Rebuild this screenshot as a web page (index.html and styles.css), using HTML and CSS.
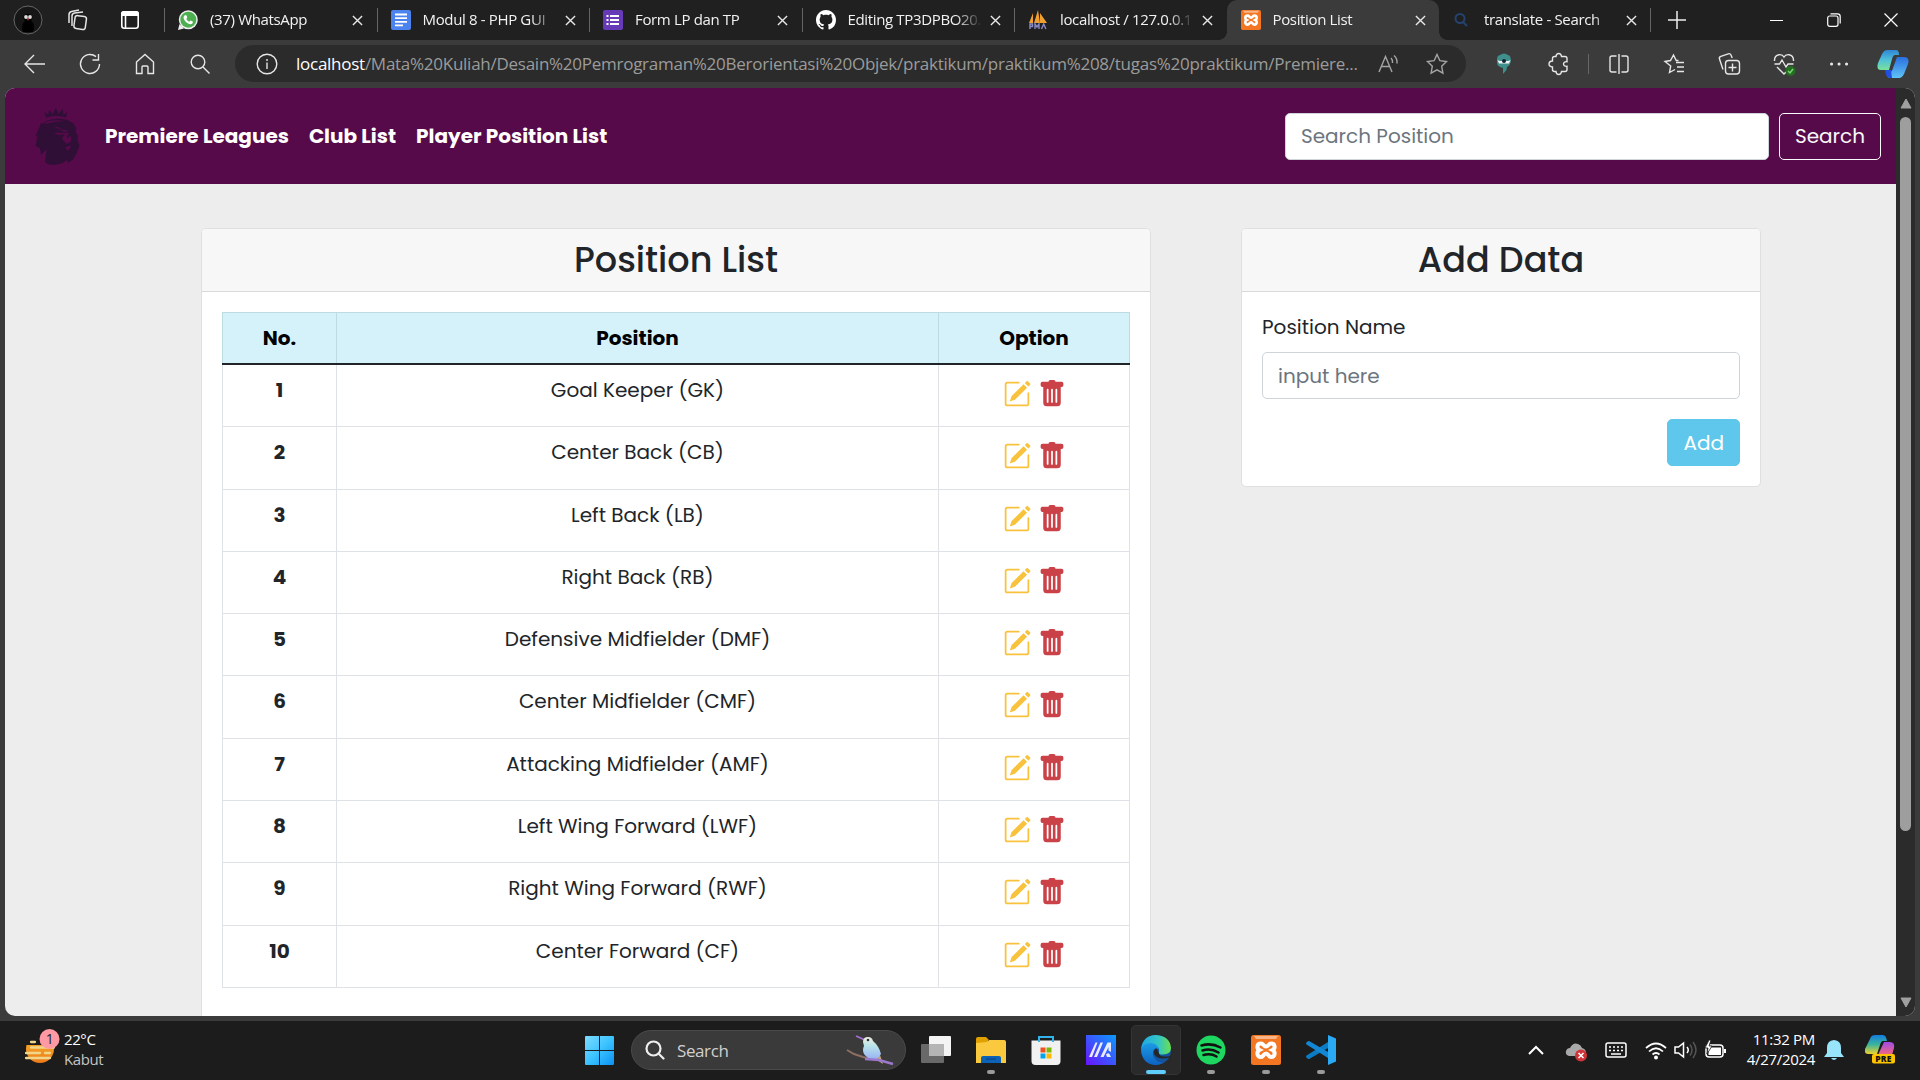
FILE: index.html
```html
<!DOCTYPE html>
<html lang="en">
<head>
<meta charset="utf-8">
<title>Position List</title>
<link rel="stylesheet" href="styles.css">
</head>
<body>
<svg class="defs" aria-hidden="true">
  <symbol id="close" viewBox="0 0 12 12"><path d="M1 1l10 10M11 1L1 11" fill="none" stroke="#e8e8e8" stroke-width="1.5"/></symbol>
  <symbol id="edit" viewBox="0 0 16 16"><path d="M15.502 1.94a.5.5 0 0 1 0 .706L14.459 3.69l-2-2L13.502.646a.5.5 0 0 1 .707 0l1.293 1.293zm-1.75 2.456-2-2L4.939 9.21a.5.5 0 0 0-.121.196l-.805 2.414a.25.25 0 0 0 .316.316l2.414-.805a.5.5 0 0 0 .196-.12l6.813-6.814z"/><path d="M1 13.5A1.5 1.5 0 0 0 2.5 15h11a1.5 1.5 0 0 0 1.5-1.5v-6a.5.5 0 0 0-1 0v6a.5.5 0 0 1-.5.5h-11a.5.5 0 0 1-.5-.5v-11a.5.5 0 0 1 .5-.5H9a.5.5 0 0 0 0-1H2.5A1.5 1.5 0 0 0 1 2.5v11z"/></symbol>
  <symbol id="trash" viewBox="0 0 16 16"><path d="M2.5 1a1 1 0 0 0-1 1v1a1 1 0 0 0 1 1H3v9a2 2 0 0 0 2 2h6a2 2 0 0 0 2-2V4h.5a1 1 0 0 0 1-1V2a1 1 0 0 0-1-1H10a1 1 0 0 0-1-1H7a1 1 0 0 0-1 1H2.5zm3 4a.5.5 0 0 1 .5.5v7a.5.5 0 0 1-1 0v-7a.5.5 0 0 1 .5-.5zM8 5a.5.5 0 0 1 .5.5v7a.5.5 0 0 1-1 0v-7A.5.5 0 0 1 8 5zm3 .5v7a.5.5 0 0 1-1 0v-7a.5.5 0 0 1 1 0z"/></symbol>
  <symbol id="xampp" viewBox="0 0 30 30"><rect width="30" height="30" rx="2.5" fill="#f37623"/><path d="M3 1h24l-2 3H5z" fill="#f8b58a"/><path d="M10 8.500c-4.500 0-4.500 5-1.500 6.500-3 1.500-3 7 1.500 7 2.500 0 2.500-3.500 5-3.500s2.500 3.500 5 3.500c4.500 0 4.500-5.500 1.500-7 3-1.500 3-6.500-1.500-6.500-2.500 0-2.500 3-5 3s-2.500-3-5-3z" fill="none" stroke="#fff" stroke-width="4"/><path d="M13 15h4" stroke="#f37623" stroke-width="2"/></symbol>
</svg>

<header class="tabstrip">
  <div class="tab-tools">
    <svg width="30" height="30" viewBox="0 0 30 30"><circle cx="15" cy="15" r="14" fill="#161616" stroke="#666"/><path d="M10 27c-2-7 0-9 2-11-3-4-1-7 3-7s6 3 3 7c3 2 4 5 2 11z" fill="#000"/><circle cx="13" cy="12" r="1.900" fill="#ddd"/><circle cx="17" cy="12" r="1.900" fill="#ddd"/><path d="M14 13h2l-1 3z" fill="#d55"/></svg>
    <svg width="22" height="22" viewBox="0 0 22 22" fill="none" stroke="#e4e4e4" stroke-width="1.500"><rect x="8.500" y="7" width="11.500" height="13" rx="2.500" transform="rotate(8 14 13)"/><path d="M6 17V7q0-2.500 2.500-3L17 3M3 14V6q0-3 2.500-3.500L13 1"/></svg>
    <svg width="20" height="20" viewBox="0 0 20 20"><rect x="1.800" y="1.800" width="16.400" height="16.400" rx="2.500" fill="none" stroke="#fff" stroke-width="1.600"/><path d="M1 6V4q0-3 3-3h12q3 0 3 3v2z" fill="#fff"/><path d="M5.500 5v13" stroke="#fff" stroke-width="1.600"/></svg>
  </div>
  <div class="tab">
    <svg class="fav" viewBox="0 0 20 20"><circle cx="10.300" cy="9.700" r="9.500" fill="#eee"/><path d="M0 20l1.500-6 4.500 4.500z" fill="#eee"/><circle cx="10.300" cy="9.700" r="8" fill="#4caf50"/><path d="M6.500 5.500q1.500-1 2.200.5l.6 1.600-1 1.400q1 2 3 2.800l1.200-1.200 2.200 1q.6.500-.2 1.700-1.500 1.700-4.500.2Q6 11 5.500 7.800q0-1.400 1-2.300z" fill="#fff"/></svg>
    <span class="title">(37) WhatsApp</span><svg class="x"><use href="#close"/></svg>
  </div>
  <div class="tab">
    <svg class="fav" viewBox="0 0 20 20"><rect width="20" height="20" rx="2" fill="#4c83ee"/><path d="M4 4.500h12M4 8.200h12M4 11.800h12M4 15.300h8" stroke="#fff" stroke-width="1.800"/></svg>
    <span class="title">Modul 8 - PHP GUI</span><svg class="x"><use href="#close"/></svg>
  </div>
  <div class="tab">
    <svg class="fav" viewBox="0 0 20 20"><rect width="20" height="20" rx="2" fill="#673ab7"/><path d="M7 6h9M7 10h9M7 14h9M3.500 6h2M3.500 10h2M3.500 14h2" stroke="#fff" stroke-width="2"/></svg>
    <span class="title">Form LP dan TP</span><svg class="x"><use href="#close"/></svg>
  </div>
  <div class="tab">
    <svg class="fav" viewBox="0 0 16 16"><path fill="#fff" d="M8 0C3.580 0 0 3.580 0 8c0 3.540 2.290 6.530 5.470 7.590.4.070.55-.17.55-.38 0-.19-.01-.82-.01-1.490-2.010.37-2.530-.49-2.690-.94-.09-.23-.48-.94-.82-1.130-.28-.15-.68-.52-.01-.53.63-.01 1.080.58 1.230.82.72 1.210 1.870.87 2.330.66.070-.52.28-.87.51-1.070-1.780-.2-3.640-.89-3.640-3.950 0-.87.31-1.590.82-2.150-.08-.2-.36-1.020.08-2.120 0 0 .67-.21 2.200.82.64-.18 1.320-.27 2-.27s1.360.09 2 .27c1.530-1.040 2.200-.82 2.200-.82.44 1.100.16 1.920.08 2.120.51.56.82 1.270.82 2.150 0 3.070-1.870 3.750-3.650 3.950.29.25.54.73.54 1.480 0 1.070-.01 1.930-.01 2.200 0 .21.15.46.55.38A8.010 8.010 0 0 0 16 8c0-4.420-3.580-8-8-8z"/></svg>
    <span class="title">Editing TP3DPBO20.</span><svg class="x"><use href="#close"/></svg>
  </div>
  <div class="tab">
    <svg class="fav" viewBox="0 0 20 20"><path d="M1 13L5 3v10zM6 13L10 0l2 13zM12 13V3l7 10z" fill="#f0a030"/><path d="M2 19v-5h2.500v2.500H2M7 19v-5l2 3 2-3v5M13.500 19l2.200-5 2.200 5" fill="none" stroke="#8a8cc8" stroke-width="1.400"/></svg>
    <span class="title">localhost / 127.0.0.1</span><svg class="x"><use href="#close"/></svg>
  </div>
  <div class="tab active">
    <svg class="fav"><use href="#xampp"/></svg>
    <span class="title">Position List</span><svg class="x"><use href="#close"/></svg>
  </div>
  <div class="tab last">
    <svg class="fav" viewBox="0 0 20 20" fill="none" stroke="#24436f" stroke-width="2"><circle cx="8" cy="8.500" r="4.500"/><path d="M11 12l4 4"/></svg>
    <span class="title">translate - Search</span><svg class="x"><use href="#close"/></svg>
  </div>
  <svg class="plus" width="18" height="18" viewBox="0 0 18 18"><path d="M9 0v18M0 9h18" stroke="#eee" stroke-width="1.500"/></svg>
  <div class="window-buttons">
    <svg width="14" height="14" viewBox="0 0 14 14"><path d="M0 7.500h13" stroke="#fff"/></svg>
    <svg width="14" height="14" viewBox="0 0 14 14" fill="none" stroke="#fff" stroke-width="1.200"><rect x=".7" y="3" width="10.300" height="10.300" rx="2"/><path d="M3.500.8h7q2.700 0 2.700 2.700v7"/></svg>
    <svg width="14" height="14" viewBox="0 0 14 14"><path d="M.5.5l13 13M13.500.5l-13 13" stroke="#fff" stroke-width="1.200"/></svg>
  </div>
</header>

<div class="toolbar">
  <div class="slots">
    <svg viewBox="0 0 24 24"><path d="M22 12H2.500M11 3l-9 9 9 9"/></svg>
    <svg viewBox="0 0 24 24"><path d="M21.500 12A9.500 9.500 0 1 1 18 4.600M20.500 2v6h-6"/></svg>
    <svg viewBox="0 0 24 24"><path d="M3.500 10L12 2.500l8.500 7.500v11.500H15V15q0-1-1-1h-4q-1 0-1 1v6.500H3.500z"/></svg>
    <svg viewBox="0 0 24 24"><circle cx="10" cy="10" r="6.800"/><path d="M15 15l6.500 6.500"/></svg>
  </div>
  <div class="address">
    <svg viewBox="0 0 24 24"><circle cx="12" cy="12" r="9.800"/><path d="M12 10.500v6.500M12 7v2"/></svg>
    <span class="url"><b>localhost</b>/Mata%20Kuliah/Desain%20Pemrograman%20Berorientasi%20Objek/praktikum/praktikum%208/tugas%20praktikum/Premiere...</span>
    <svg class="dim" viewBox="0 0 24 24"><path d="M3 20L9.500 4.500 16 20M5.500 14.500h8M15 6q2 2 1.500 5M18 3.500q3.500 3 3 8"/></svg>
    <svg class="dim star" viewBox="0 0 24 24"><path d="M12 2.500l2.900 6.200 6.600.9-4.800 4.700 1.200 6.900L12 17.900l-5.900 3.300 1.200-6.900-4.800-4.700 6.600-.9z"/></svg>
  </div>
  <div class="slots">
    <svg class="solid" viewBox="0 0 24 24"><path d="M8 3l2-1 2-.5 2 .5 2 1 2 1 .8 3v3l-1.300 3-2.500 2-.5 3-3.500 4v-6l-3-1-2.500-2L5 10V7l.8-3z" fill="#3f8f8c"/><path d="M5.500 8l2 1h9l2-1-1.500 3.500h-10z" fill="#f4f4f4"/><circle cx="12" cy="9" r="2" fill="#123"/></svg>
    <svg viewBox="0 0 24 24"><path d="M9 4.500q.3-3 2.700-3T14.500 4.500H18q2 0 2 2v3.200c-4.600-.7-4.600 5.300 0 4.600v3.200q0 2-2 2h-3.500q-.3 3-2.800 3T9 19.500H7.500q-2 0-2-2V15Q2 14.700 2 12t3.500-3V6.500q0-2 2-2z"/></svg>
    <i class="divider"></i>
    <svg viewBox="0 0 24 24"><path d="M9.500 4H5Q3 4 3 6v12q0 2 2 2h4.500M14.500 4H19q2 0 2 2v12q0 2-2 2h-4.500M12 2v20"/></svg>
    <svg viewBox="0 0 24 24"><path d="M14 10.500h8M15 15h7M15 19.500h7M13 17.500l-5.500 3 1.200-6.500L3 9.500l5.500-1L11.500 3l2.700 5.500h2.300"/></svg>
    <svg viewBox="0 0 24 24"><rect x="8.500" y="8.500" width="14" height="13.500" rx="3"/><path d="M15.500 11.500v8M11.500 15.500h8M6 17.500L2.500 7q-.7-2 1.300-2.700l7.500-2.500q1.800-.6 2.700 1.200l1.200 3"/></svg>
    <svg viewBox="0 0 24 24"><path d="M2.500 12h5l2.500-4 4 7 2-3h5.500M2.500 9q-.3-5.500 4.500-6.300Q10.500 2.300 12 5q1.500-2.700 5-2.300 4.800.8 4.500 6.300M5 15l7 7 2-2"/><circle cx="18.500" cy="19" r="5" fill="#22701f" stroke="none"/><path d="M16 19l2 2 3-4" stroke="#7fd47b"/></svg>
    <svg viewBox="0 0 24 24"><path d="M4.500 12h.1M12 12h.1M19.500 12h.1" stroke-width="3" stroke-linecap="round"/></svg>
    <svg class="copilot solid" viewBox="0 0 32 28"><defs><linearGradient id="cg1" x2="0" y2="1"><stop stop-color="#2f86d6"/><stop offset=".5" stop-color="#4fc0d8"/><stop offset="1" stop-color="#7be39a"/></linearGradient><linearGradient id="cg2" x2="0" y2="1"><stop stop-color="#2a6fe0"/><stop offset="1" stop-color="#5fc4f5"/></linearGradient></defs><path d="M5 4q2-4 5-4h9q3 0 3 5h-4q-2 0-3 4l-3 11H4q-5 0-3-7z" fill="url(#cg1)"/><path d="M27 24q-2 4-5 4h-9q-3 0-4-6h4q2 0 3-4l4-11h7q6 0 4 7z" fill="url(#cg2)"/><path d="M8 20h6l1 8h-2q-4 0-5-8z" fill="#214fe0"/></svg>
  </div>
</div>

<main class="window">
  <div class="page">
    <nav class="navbar">
      <svg class="lion" viewBox="0 0 44 57"><path d="M11 9.500L8.500 4l4 2.500L14 2l3 4 3.500-6L23 6l4-5 1 6 4-3-1.500 5.500q-10-3.500-19.500 0z"/><path d="M11 13q10-4 21-1l6 3.500 3 5-1 3 2.500 5-.5 4 2 5-2.500 7-4 7-5 3.500-1-3-5 3.500-8 1.500q-6 0-9-3l1.500-13-5.500 6-1-7L0 38l2-10-2 .5L6 14l1 2z"/><path class="cut" d="M10 14q9-3 19-1-9 0-19 3zM18 19q5-1 8 2.500l6 1 1 1-5 .5q-3-3-10-5zM18 25q6-1 9 0l7 0-2 2-5-.5-4 .5zM26.500 30q3-4 5-3v4l3-3 1 1v4.500l-4 2.500q-4-2.500-5-6zM29.500 39.500l6-2-1 2.500-2.500 3-1-2z"/></svg>
      <div class="links"><a>Premiere Leagues</a><a>Club List</a><a>Player Position List</a></div>
      <div class="search"><div class="input">Search Position</div><div class="btn outline">Search</div></div>
    </nav>
    <div class="content">
      <section class="card list">
        <h2>Position List</h2>
        <div class="body">
          <table>
            <thead><tr><th class="no">No.</th><th>Position</th><th class="opt">Option</th></tr></thead>
            <tbody id="rows"></tbody>
          </table>
        </div>
      </section>
      <section class="card form">
        <h2>Add Data</h2>
        <div class="body">
          <label>Position Name</label>
          <div class="input">input here</div>
          <div class="btn info">Add</div>
        </div>
      </section>
    </div>
  </div>
  <div class="scrollbar">
    <svg width="12" height="11" viewBox="0 0 12 11"><path d="M6 1l5 9H1z" fill="#a0a0a0" stroke="#a0a0a0" stroke-linejoin="round"/></svg>
    <div class="thumb"></div>
    <svg width="12" height="11" viewBox="0 0 12 11"><path d="M6 10l5-9H1z" fill="#a0a0a0" stroke="#a0a0a0" stroke-linejoin="round"/></svg>
  </div>
</main>

<footer class="taskbar">
  <div class="weather">
    <svg width="36" height="38" viewBox="0 0 36 38"><defs><linearGradient id="sun" x2="0" y2="1"><stop stop-color="#f7b92c"/><stop offset="1" stop-color="#ee7a1a"/></linearGradient></defs><circle cx="15" cy="21" r="14" fill="url(#sun)"/><path d="M0 3h30v14H0z" fill="#1c1c1c"/><path d="M6 14h4M6 19.500h23M1 25h14M20 25h5M1 30h24" stroke="#f0d68a" stroke-width="2.300" stroke-linecap="round"/><circle cx="24.500" cy="11" r="10" fill="#ff99a4"/><text x="24.500" y="16" text-anchor="middle" font-size="14" fill="#222">1</text></svg>
    <p>22°C<span>Kabut</span></p>
  </div>
  <div class="apps">
    <svg class="start" width="29" height="29" viewBox="0 0 29 29"><defs><linearGradient id="win" x2="1" y2="1"><stop stop-color="#7fdcff"/><stop offset=".5" stop-color="#3cc3ff"/><stop offset="1" stop-color="#0a91f5"/></linearGradient></defs><path d="M0 1q0-1 1-1h13v14H0zM15 0h13q1 0 1 1v13H15zM0 15h14v14H1q-1 0-1-1zM15 15h14v13q0 1-1 1H15z" fill="url(#win)"/></svg>
    <div class="task-search">
      <svg width="20" height="20" viewBox="0 0 20 20" fill="none" stroke="#eee" stroke-width="2.200"><circle cx="8.500" cy="8.500" r="7"/><path d="M13.500 13.500l5 5" stroke-linecap="round"/></svg>
      <span>Search</span>
      <svg class="bird" width="48" height="32" viewBox="0 0 48 32"><defs><linearGradient id="bd" x2="0" y2="1"><stop stop-color="#f3eedd"/><stop offset=".4" stop-color="#b8e4ea"/><stop offset="1" stop-color="#97b1f5"/></linearGradient></defs><path d="M1 16l7 4 9 3 8 2" fill="none" stroke="#8d6e63" stroke-width="2"/><path d="M10 2l9 4" stroke="#a06fd0" stroke-width="1.800"/><path d="M25 13l8 5 4 12-9-6z" fill="#c9a57c"/><path d="M17 8q0-5 5-5 4 0 5 4 6 5 8 13l-4 5q-8 2-13-5-2-4 0-8z" fill="url(#bd)"/><circle cx="22" cy="6" r="1.300" fill="#234"/><path d="M19 25l14 1 14 4" fill="none" stroke="#9b78cc" stroke-width="2.500"/></svg>
    </div>
    <div class="app"><svg viewBox="0 0 30 30"><rect x="8" y="1" width="22" height="20" rx="1" fill="#f4f4f4"/><rect y="9" width="23" height="19" rx="1" fill="#777" opacity=".85"/><path d="M8 9h15v12H8z" fill="#b5b5b5"/></svg></div>
    <div class="app run"><svg viewBox="0 0 30 30"><path d="M0 4q0-2 2-2h8l3 3h-1v4H0z" fill="#e0a000"/><path d="M0 8l11-1 2-2h15q2 0 2 2v21H0z" fill="#fbc93d"/><path d="M5 28v-5q0-2 2-2h16q2 0 2 2v5z" fill="#0c62b4"/><path d="M10 24h10" stroke="#053f80"/></svg></div>
    <div class="app"><svg viewBox="0 0 30 30"><path d="M.5 5.500h29V26q0 4-4 4h-21q-4 0-4-4z" fill="#f1f1f1"/><path d="M8 7V2h14v5" fill="none" stroke="#33b3ec" stroke-width="2"/><path d="M9.500 12.500h5v5h-5z" fill="#f25022"/><path d="M15.500 12.500h5v5h-5z" fill="#7fba00"/><path d="M9.500 18.500h5v5h-5z" fill="#00a4ef"/><path d="M15.500 18.500h5v5h-5z" fill="#ffb900"/></svg></div>
    <div class="app"><svg viewBox="0 0 30 30"><defs><linearGradient id="asus" x1="1" x2="0" y2="1"><stop stop-color="#0a9cff"/><stop offset="1" stop-color="#6a12ff"/></linearGradient></defs><path d="M0 0h30v30H0z" fill="url(#asus)"/><path d="M3 22L9.500 7.500h2L6 22zM8 22l6.500-14.500h2.500L11 22zM14.500 22l7-14.500H25V17l-2.500-1.500V12l-5 10zM20 19.500q2-2 3.500-.5l1.500 3h-4z" fill="#e9ecff"/></svg></div>
    <div class="app current run"><svg viewBox="0 0 30 30"><defs><linearGradient id="e1" x2="1"><stop stop-color="#1ea7e8"/><stop offset=".6" stop-color="#35c7c0"/><stop offset="1" stop-color="#6be04a"/></linearGradient><linearGradient id="e2" x2="0" y2="1"><stop stop-color="#1c9be6"/><stop offset="1" stop-color="#0d62c0"/></linearGradient></defs><circle cx="15" cy="15" r="15" fill="#12549f"/><path d="M0 14Q2 0 15 0q14 1 15 13 0 6-8 6.500-5 0-4.500-2 1.500-2-.5-5Q10 5 0 14z" fill="url(#e1)"/><path d="M0 14q3-6 9-6 7 0 9 6-7-2-6 6 2 7 10 8-4 2-8 2Q1 29 0 14z" fill="url(#e2)"/><path d="M15 13q-5 5 1 9 5 3 13 0l1 4-4 4q8-9 3-9-11 2-11-3z" fill="#262626"/></svg></div>
    <div class="app run"><svg viewBox="0 0 30 30"><circle cx="15" cy="15" r="14.500" fill="#1ed760"/><path d="M5.500 10.500q10-3 19 2M6.500 15.500q8.500-2.500 16 2M7.500 20q7.500-2 13 1.500" fill="none" stroke="#111" stroke-width="2.500" stroke-linecap="round"/></svg></div>
    <div class="app run"><svg><use href="#xampp"/></svg></div>
    <div class="app run"><svg viewBox="0 0 30 30"><path d="M22 7v6L4 23.500q-1.500 1-2.500 0L.5 22.500q-1-1 0-2z" fill="#0b7cc4"/><path d="M22 23v-6L4 6.500q-1.500-1-2.500 0L.5 7.500q-1 1 0 2z" fill="#1387d4"/><path d="M22 0l8 3.500v23L22 30z" fill="#2aa9f4"/></svg></div>
  </div>
  <div class="tray">
    <svg class="chev" viewBox="0 0 24 24"><path d="M5 16l7-7 7 7" stroke-width="2"/></svg>
    <svg viewBox="0 0 24 24"><path d="M5 18q-4-1-3-5 1-3 4-3 3-6 8-4 3 1 4 4 4 1 4 5l-2 3z" fill="#a9a9a9" stroke="none"/><circle cx="17" cy="17.500" r="6" fill="#d13438" stroke="none"/><path d="M14.500 15l5 5m0-5l-5 5"/></svg>
    <svg viewBox="0 0 24 24"><rect x="2" y="5" width="20" height="14" rx="2"/><path d="M5 9h14M5 12.500h14" stroke-dasharray="2 2"/><path d="M7 16h10"/></svg>
    <svg viewBox="0 0 24 24"><path d="M2 10q10-9 20 0M5 13.500q7-6.500 14 0M8.500 16.500q3.500-3 7 0" stroke-width="1.700"/><circle cx="12" cy="19.500" r="2" fill="#fff" stroke="none"/></svg>
    <svg class="vol" viewBox="0 0 24 24"><path d="M1 9h3.500l5-4v14l-5-4H1zM13 9q2.500 3 0 6"/><path d="M16 6.500q4 5.500 0 11M19 4q6 8 0 16" stroke="#555"/></svg>
    <svg viewBox="0 0 24 24"><rect x="3" y="7" width="17" height="12" rx="3"/><rect x="5.500" y="9.500" width="12.500" height="7.500" fill="#fff" stroke="none"/><path d="M22 11v4" stroke-width="2"/><path d="M6 2L2 10h3l-1 6 5-8H6l2-6z" fill="#fff" stroke="#1c1c1c" stroke-width=".8"/></svg>
    <p>11:32 PM<br>4/27/2024</p>
    <svg class="bell" viewBox="0 0 24 24"><path d="M12 2q7 .5 7 8v5l3 4H2l3-4v-5q0-7.500 7-8zM9 20h6q-3 4-6 0z" fill="#97e4fb" stroke="none"/></svg>
    <svg class="pre" width="30" height="30" viewBox="0 0 30 30"><defs><linearGradient id="p1" x2="0" y2="1"><stop stop-color="#137ce0"/><stop offset=".5" stop-color="#3bb49d"/><stop offset="1" stop-color="#f0d22c"/></linearGradient><linearGradient id="p2" x2="0" y2="1"><stop stop-color="#a04be8"/><stop offset="1" stop-color="#f4697c"/></linearGradient></defs><path d="M5 4q1-4 5-4h8q3 0 4 6h-4q-2 0-3 4l-3 9H3q-4 0-3-5z" fill="url(#p1)" stroke="none"/><path d="M19 7h6q5 0 4 6l-2 7H13z" fill="url(#p2)" stroke="none"/><rect x="7" y="19" width="23" height="9.500" rx="2" fill="#ffc400" stroke="none"/><text x="18.500" y="27" text-anchor="middle" font-size="8.500" font-weight="800" fill="#111" stroke="none" letter-spacing=".3">PRE</text></svg>
  </div>
</footer>
<script src="rows.js"></script>
</body>
</html>
```
FILE: styles.css
```css
* { box-sizing: border-box; }
body {
  margin: 0; width: 1920px; height: 1080px; overflow: hidden;
  display: flex; flex-direction: column;
  background: #3b3b3b; color: #fff;
  font-family: "Open Sans", sans-serif; font-size: 15px;
}
svg { display: block; flex: none; }
p { margin: 0; }
.defs { position: absolute; width: 0; height: 0; }

/* tab strip */
.tabstrip { display: flex; align-items: center; height: 40px; background: #202020; flex: none; }
.tab-tools { width: 164px; display: flex; align-items: center; padding-left: 13px; gap: 23px; flex: none; }
.tab-tools svg:last-child { margin-left: 9px; }
.tab { width: 212.500px; height: 40px; display: flex; align-items: center; padding-left: 14px; flex: none; position: relative; }
.tab::before { content: ""; width: 1px; height: 24px; background: #666; position: absolute; left: 0; top: 8px; }
.fav { width: 20px; height: 20px; margin-right: 12px; }
.title {
  width: 136px; height: 24px; line-height: 23px; white-space: nowrap; letter-spacing: -.35px; color: #f2f2f2;
  -webkit-mask-image: linear-gradient(90deg, #000 108px, transparent 134px);
  mask-image: linear-gradient(90deg, #000 108px, transparent 134px);
}
.x { width: 11px; height: 11px; margin-left: 6px; }
.tab.active { background: #3b3b3b; border-radius: 10px 10px 0 0; }
.tab.active::before, .tab.active::after {
  content: ""; position: absolute; bottom: 0; top: auto; width: 8px; height: 8px;
}
.tab.active::before { left: -8px; background: radial-gradient(circle at 0 0, #202020 7.500px, #3b3b3b 8px); }
.tab.active::after { right: -8px; background: radial-gradient(circle at 100% 0, #202020 7.500px, #3b3b3b 8px); }
.tab.last { width: 211.500px; padding-left: 13px; }
.tab.last::before { left: 210.500px; }
.plus { margin-left: 17px; }
.window-buttons { margin-left: auto; display: flex; gap: 43px; padding-right: 22px; }

/* toolbar */
.toolbar { height: 48px; display: flex; align-items: center; padding-left: 7.500px; flex: none; }
.toolbar svg { width: 24px; height: 24px; fill: none; stroke: #e6e6e6; stroke-width: 1.400; }
.slots { display: flex; align-items: center; }
.slots svg { margin: 0 15.500px; }
.toolbar svg.solid { stroke: none; }
.toolbar svg.copilot { width: 32px; height: 28px; margin: 0 11px; }
.divider { width: 1px; height: 20px; background: #666; margin: 0 2px; }
.address {
  width: 1232px; height: 37px; margin: -1px 10.500px 0 7.500px; padding-left: 20px;
  display: flex; align-items: center; border-radius: 19px; background: #2b2b2b;
}
.url { width: 1062px; margin-left: 17px; padding-bottom: 1px; font-size: 17px; letter-spacing: -.26px; white-space: nowrap; color: #9b9b9b; }
.url b { font-weight: 400; color: #fff; }
.toolbar svg.dim { stroke: #a5a5a5; margin-left: 18px; }
.toolbar svg.star { margin-left: 25px; }

/* browser viewport */
.window {
  height: 928px; margin: 0 5px; display: flex; overflow: hidden; flex: none;
  border-radius: 10px; background: #ededed;
  font-family: "Poppins", sans-serif; font-size: 20px; line-height: 30px; color: #212529;
}
.page { width: 1891px; }
.scrollbar { flex: 1; background: #2b2b2b; display: flex; flex-direction: column; align-items: center; padding: 10px 0 8px; }
.thumb { width: 11px; height: 714px; margin: 8px 0 auto; border-radius: 6px; background: #9e9e9e; }

.navbar { height: 96px; display: flex; align-items: center; padding: 0 15px 0 30px; background: #560a4a; color: #fff; }
.lion { width: 45px; height: 57px; fill: #300f37; }
.lion .cut { fill: #560a4a; }
.links { display: flex; gap: 20px; margin-left: 25px; font-weight: 700; white-space: nowrap; }
.search { display: flex; gap: 10px; margin-left: auto; }
.input {
  height: 47px; padding: 7.500px 15px; line-height: 30px; border: 1px solid #ced4da; border-radius: 5px;
  background: #fff; color: #6c757d;
}
.search .input { width: 484px; }
.btn { height: 47px; padding: 7.500px 15px; border: 1px solid; border-radius: 5px; line-height: 30px; }
.outline { border-color: #f8f9fa; color: #f8f9fa; }
.info { background: #5fc7ec; border-color: #5fc7ec; color: #fff; align-self: flex-end; margin-top: 20px; }

.content { display: flex; align-items: flex-start; gap: 90px; padding: 44px 0 0 196px; }
.card { border: 1px solid #dfdfdf; border-radius: 5px; background: #fff; }
.card h2 {
  height: 63px; margin: 0; padding-top: 10px; text-align: center; font-size: 35px; font-weight: 500; line-height: 42px;
  background: #f7f7f7; border-bottom: 1px solid #d9d9d9; border-radius: 4px 4px 0 0;
}
.card .body { padding: 20px; display: flex; flex-direction: column; }
.list { width: 950px; height: 900px; }
.form { width: 520px; height: 259px; }
.form label { margin-bottom: 10px; }

table { width: 908px; border-collapse: collapse; table-layout: fixed; text-align: center; }
th, td { border: 1px solid #dee2e6; padding: 10px; vertical-align: top; }
thead th { height: 51px; padding-bottom: 9px; background: #d5f2fb; color: #000; font-weight: 700; border-color: #bddbe3; border-bottom: 2px solid #212529; }
.no { width: 114px; }
.opt { width: 191px; }
tbody th, tbody td { height: 62.300px; }
tbody tr:first-child > * { height: 63.300px; }
tbody th { font-weight: 700; }
.actions { display: flex; justify-content: center; gap: 7px; padding-top: 5px; }
.actions svg { width: 28px; height: 28px; margin-bottom: -6px; }
.edit { fill: #f9c23c; }
.trash { fill: #ca4148; }

/* taskbar */
.taskbar { margin-top: auto; height: 59px; display: flex; align-items: center; background: #1c1c1c; flex: none; }
.weather { width: 585px; padding-left: 25px; display: flex; align-items: center; gap: 3px; line-height: 20px; letter-spacing: -.4px; }
.weather svg { margin-top: -8px; }
.weather p { padding-bottom: 3px; }
.weather span { display: block; color: #c4c4c4; }
.apps { display: flex; align-items: center; margin-top: -1px; }
.task-search {
  width: 275px; height: 40px; margin: 0 2px 0 17px; padding: 0 11px 0 13px; display: flex; align-items: center;
  border-radius: 20px; background: #3a3a3a; border: 1px solid #4a4a4a; font-size: 17px; letter-spacing: -.4px; color: #d0d0d0;
}
.task-search span { margin-left: 12px; }
.bird { margin-left: auto; }
.app { width: 50px; height: 50px; margin: 0 2.500px; display: flex; align-items: center; justify-content: center; position: relative; border-radius: 5px; }
.app svg { width: 30px; height: 30px; }
.run::after { content: ""; position: absolute; bottom: 1px; left: 21px; width: 8px; height: 4px; border-radius: 2px; background: #9a9a9a; }
.current { background: #2a2a2a; border: 1px solid #343434; }
.current::after { left: 14px; bottom: 0; width: 20px; background: #60cdff; }
.tray { display: flex; align-items: center; margin-left: auto; padding-right: 25px; margin-top: -1px; }
.tray svg { width: 24px; height: 24px; margin-right: 16px; fill: none; stroke: #fff; stroke-width: 1.500; }
.tray svg:nth-child(4) { margin-right: 6px; }
.tray svg.vol { margin-right: 5px; }
.tray svg:nth-child(6) { margin-right: 0; }
.tray p { width: 88px; text-align: right; line-height: 20px; letter-spacing: -.3px; padding-bottom: 2px; }
.tray svg.bell { margin: 0 19px 0 7px; }
.tray svg.pre { width: 30px; height: 30px; margin: 0; }
```
FILE: rows.js
```
// Fills the table with one row per player position.
var positions = [
  'Goal Keeper (GK)', 'Center Back (CB)', 'Left Back (LB)', 'Right Back (RB)',
  'Defensive Midfielder (DMF)', 'Center Midfielder (CMF)', 'Attacking Midfielder (AMF)',
  'Left Wing Forward (LWF)', 'Right Wing Forward (RWF)', 'Center Forward (CF)'
];
document.getElementById('rows').innerHTML = positions.map(function (name, i) {
  return '<tr><th>' + (i + 1) + '</th><td>' + name + '</td><td><div class="actions">' +
    '<svg class="edit"><use href="#edit"/></svg><svg class="trash"><use href="#trash"/></svg></div></td></tr>';
}).join('');
```
